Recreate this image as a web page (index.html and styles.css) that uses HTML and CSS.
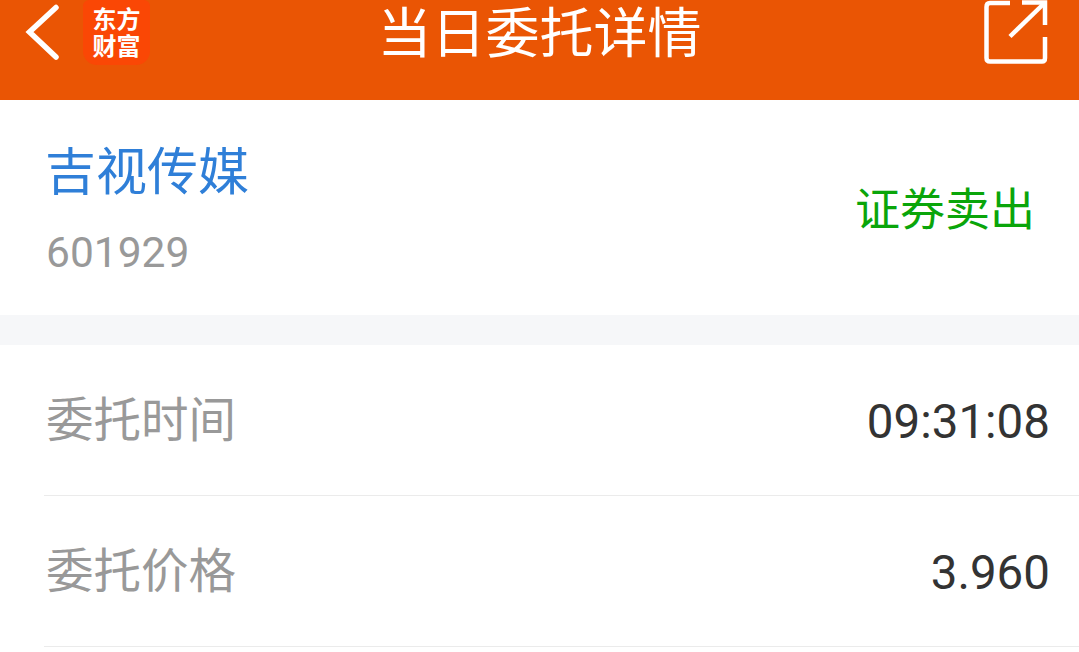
FILE: index.html
```html
<!DOCTYPE html>
<html lang="zh-CN">
<head>
    <meta charset="UTF-8">
    <title>当日委托详情</title>
    <link rel="stylesheet" href="styles.css">
</head>
<body>
    <!-- Header -->
    <header class="top-bar">
        <div class="top-left">
            <svg class="back-icon" width="34" height="62" viewBox="0 0 34 62">
                <path d="M31 7.500 L4.500 32 L31 57" fill="none" stroke="#fff" stroke-width="5.500" stroke-linecap="round" stroke-linejoin="miter"/>
            </svg>
            <div class="logo">
                <span>东方</span>
                <span>财富</span>
            </div>
        </div>
        <h1>当日委托详情</h1>
        <svg class="share-icon" width="64" height="64" viewBox="0 0 64 64">
            <path d="M26 3 H6 Q2.500 3 2.500 7 V58 Q2.500 61.500 6 61.500 H58 Q61 61.500 61 58 V37" fill="none" stroke="#fff" stroke-width="4.500"/>
            <path d="M38 2.500 H61 V25" fill="none" stroke="#fff" stroke-width="4.500"/>
            <path d="M60 3.500 L26 36.500" fill="none" stroke="#fff" stroke-width="4.500"/>
        </svg>
    </header>

    <!-- Stock -->
    <section class="stock">
        <div>
            <div class="stock-name">吉视传媒</div>
            <div class="stock-code">601929</div>
        </div>
        <div class="stock-action">证券卖出</div>
    </section>

    <div class="divider"></div>

    <!-- Details -->
    <section class="detail-list">
        <div class="detail-row">
            <span class="detail-label">委托时间</span>
            <span class="detail-value">09:31:08</span>
        </div>
        <div class="detail-row">
            <span class="detail-label">委托价格</span>
            <span class="detail-value">3.960</span>
        </div>
    </section>
</body>
</html>
```

FILE: styles.css
```css
* {
    margin: 0;
    padding: 0;
    box-sizing: border-box;
    font-family: Roboto, "Noto Sans CJK SC", sans-serif;
}

html, body {
    height: 652px;
    overflow: hidden;
}

body {
    background: #fff;
}

/* Header */
.top-bar {
    position: relative;
    display: flex;
    justify-content: space-between;
    align-items: flex-start;
    height: 100px;
    padding-right: 31px;
    background: #ea5504;
}

.top-left {
    display: flex;
    align-items: flex-start;
}

.back-icon {
    margin-left: 25px;
}

.logo {
    display: flex;
    flex-direction: column;
    align-items: center;
    justify-content: center;
    width: 67px;
    height: 65px;
    margin-left: 24px;
    padding-top: 2px;
    border-radius: 6px 6px 14px 14px;
    background: #fa4705;
    color: #fff;
    font-size: 24px;
    font-weight: 700;
}

.logo span {
    display: block;
    line-height: 27px;
}

.top-bar h1 {
    position: absolute;
    left: 0;
    right: 0;
    top: 0;
    color: #fff;
    font-size: 54px;
    font-weight: 400;
    line-height: 70px;
    text-align: center;
}

/* Stock */
.stock {
    display: flex;
    justify-content: space-between;
    align-items: center;
    height: 215px;
    padding: 0 44px 0 46px;
}

.stock-name {
    color: #2f7fd8;
    font-size: 51px;
    line-height: 60px;
    margin-top: 4px;
    margin-left: -1px;
}

.stock-code {
    color: #999;
    font-size: 42.500px;
    line-height: 48px;
    margin-top: 26px;
}

.stock-action {
    color: #0aa50a;
    font-size: 45px;
    line-height: 54px;
    margin-top: 7px;
}

.divider {
    height: 30px;
    background: #f6f7f9;
}

/* Details */
.detail-row {
    display: flex;
    justify-content: space-between;
    align-items: center;
    height: 151px;
    margin-left: 44px;
    padding-right: 29px;
    border-bottom: 1px solid #ebebeb;
}

.detail-label {
    margin-left: 2px;
    margin-bottom: 8px;
    color: #999;
    font-size: 47.500px;
}

.detail-value {
    margin-top: 3px;
    color: #333;
    font-size: 47.500px;
}
```
